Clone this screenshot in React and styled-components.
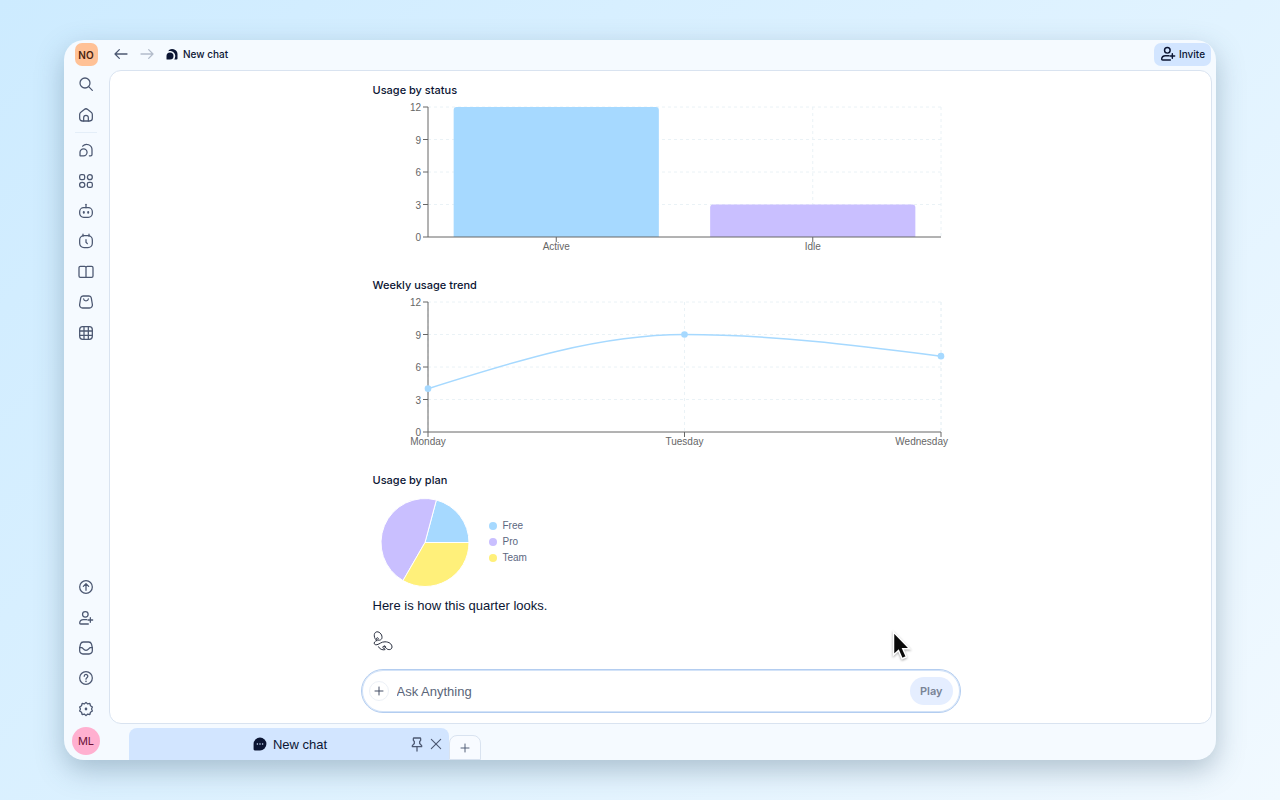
import React, { useState } from 'react'
import styled, { createGlobalStyle } from 'styled-components';

const GlobalStyle = createGlobalStyle`
    * {
        box-sizing: border-box;
    }
    body {
        margin: 0;
        font-family: Inter, "Liberation Sans", sans-serif;
        color: #0b1533;
    }
    button, input {
        font-family: inherit;
        color: inherit;
    }
`;

const textFont = '"Liberation Sans", Inter, sans-serif';

const Backdrop = styled.div`
    min-height: 100vh;
    display: flex;
    padding: 40px 64px;
    background: linear-gradient(135deg, #cdebff 0%, #e1f3ff 60%, #f1f9ff 100%);
`;

const Window = styled.div`
    flex: 1;
    min-width: 0;
    display: flex;
    background: #f5faff;
    border-radius: 20px;
    overflow: hidden;
    box-shadow: 0 10px 28px rgba(60, 90, 115, 0.34);
`;

const SideBar = styled.nav`
    flex: none;
    width: 45px;
    display: flex;
    flex-direction: column;
    align-items: center;
    justify-content: space-between;
    padding: 3px 1px 5px 0;
`;

const SideGroup = styled.div`
    display: flex;
    flex-direction: column;
    align-items: center;
`;

const IconList = styled.div`
    display: grid;
    grid-auto-rows: 1fr;
    align-items: center;
    height: ${({ $height }) => $height}px;
`;

const Workspace = styled.button`
    width: 23px;
    height: 23px;
    margin-bottom: 2px;
    padding: 0;
    border: 0;
    border-radius: 7px;
    background: #ffc196;
    color: #4a2410;
    font-size: 10px;
    font-weight: 600;
`;

const Avatar = styled.button`
    width: 28px;
    height: 28px;
    margin-top: 3px;
    padding: 0;
    border: 0;
    border-radius: 50%;
    background: #ffb0d0;
    color: #6b1237;
    font-size: 11px;
`;

const IconButton = styled.button`
    display: flex;
    align-items: center;
    justify-content: center;
    width: ${({ $width }) => $width || 30}px;
    height: ${({ $height }) => $height || 30}px;
    padding: 0;
    border: 0;
    background: none;
    color: ${({ $color }) => $color || '#4c5872'};
`;

const Divider = styled.hr`
    width: 22px;
    height: 1px;
    margin: 2px 0;
    border: 0;
    background: #e4eef8;
`;

const Main = styled.div`
    flex: 1;
    min-width: 0;
    display: flex;
    flex-direction: column;
    padding-right: 4px;
`;

const TopBar = styled.header`
    display: flex;
    align-items: center;
    justify-content: space-between;
    height: 30px;
    padding-bottom: 2px;
`;

const Crumbs = styled.div`
    display: flex;
    align-items: center;
`;

const PageTitle = styled.h1`
    display: flex;
    align-items: center;
    gap: 5px;
    margin: 0 0 0 6px;
    font-size: 10px;
    line-height: 16px;
    font-weight: 500;
`;

const Invite = styled.button`
    display: flex;
    align-items: center;
    gap: 3px;
    height: 23px;
    margin-right: 1px;
    padding: 0 6px;
    border: 0;
    border-radius: 7px;
    background: #d2e5ff;
    font-size: 10px;
    font-weight: 500;
`;

const Panel = styled.main`
    flex: 1;
    min-height: 0;
    display: flex;
    flex-direction: column;
    justify-content: space-between;
    align-items: center;
    padding: 11px 16px 10px;
    border: 1px solid #d9e3f0;
    border-radius: 12px;
    background: #fff;
`;

const Answer = styled.div`
    width: 100%;
    max-width: 600px;
    padding: 0 12px;
`;

const Section = styled.section`
    margin-bottom: ${({ $gap }) => $gap}px;
`;

const SectionTitle = styled.h2`
    margin: 0;
    font-size: 11px;
    line-height: 16px;
    font-weight: 500;
`;

const ChartSvg = styled.svg`
    display: block;
    width: 100%;
    height: auto;
    text {
        font-family: ${textFont};
        font-size: 10px;
        fill: #666;
    }
`;

const PieRow = styled.div`
    display: flex;
    align-items: center;
    gap: 12px;
`;

const Legend = styled.ul`
    margin: 0;
    padding: 0;
    list-style: none;
`;

const LegendItem = styled.li`
    display: flex;
    align-items: center;
    gap: 6px;
    color: #5c6780;
    font-family: ${textFont};
    font-size: 10px;
    line-height: 16px;
    &::before {
        content: '';
        width: 8px;
        height: 8px;
        border-radius: 50%;
        background: ${({ $color }) => $color};
    }
`;

const Reply = styled.p`
    margin: 0 0 15px;
    font-family: ${textFont};
    font-size: 13px;
    line-height: 20px;
`;

const Composer = styled.form`
    display: flex;
    align-items: center;
    width: 100%;
    max-width: 600px;
    height: 44px;
    padding: 0 7px;
    border: 1px solid #b3cdf0;
    border-radius: 22px;
    background: #fff;
    box-shadow: inset 0 0 0 1px #d3e3f8;
`;

const AddButton = styled.button`
    display: flex;
    align-items: center;
    justify-content: center;
    width: 20px;
    height: 20px;
    padding: 0;
    border: 1px solid #edf1f7;
    border-radius: 50%;
    background: #fff;
    color: #3c4760;
`;

const Ask = styled.input`
    flex: 1;
    min-width: 0;
    padding: 0 8px;
    border: 0;
    outline: 0;
    background: none;
    font-family: ${textFont};
    font-size: 13px;
    &::placeholder {
        color: #5a6579;
        opacity: 1;
    }
`;

const Play = styled.button`
    height: 28px;
    padding: 0 10px;
    border: 0;
    border-radius: 14px;
    background: #e5eeff;
    color: #798496;
    font-size: 11px;
    font-weight: 600;
`;

const TabBar = styled.div`
    display: flex;
    align-items: flex-end;
    height: 36px;
    padding-left: 20px;
`;

const Tab = styled.div`
    display: flex;
    align-items: center;
    width: 320px;
    height: 32px;
    padding: 0 4px 0 44px;
    border-radius: 8px 8px 0 0;
    background: #d2e5ff;
`;

const TabLabel = styled.button`
    flex: 1;
    display: flex;
    align-items: center;
    justify-content: center;
    gap: 6px;
    padding: 0;
    border: 0;
    background: none;
    font-family: ${textFont};
    font-size: 13px;
`;

const NewTab = styled.button`
    display: flex;
    align-items: center;
    justify-content: center;
    width: 32px;
    height: 25px;
    padding: 0;
    border: 1px solid #d9e3f0;
    border-radius: 8px 8px 0 0;
    background: #f8fbff;
    color: #4c5872;
`;

const Cursor = styled.svg`
    position: fixed;
    left: 890px;
    top: 629px;
    pointer-events: none;
    filter: drop-shadow(0 1px 1px rgba(0, 0, 0, 0.35));
`;

const icons = {
    search: <><circle cx="10.5" cy="10.5" r="7.5" /><path d="M16 16l5.5 5.5" /></>,
    home: <><path d="M2.500 11.300c0-1.400.6-2.600 1.700-3.400l5.300-4.300c1.500-1.200 3.500-1.200 5 0l5.300 4.300c1.100.8 1.700 2 1.700 3.400v5.700a4 4 0 0 1-4 4H6.500a4 4 0 0 1-4-4z" /><path d="M8.500 21v-5a3.500 3.500 0 0 1 7 0v5" /></>,
    chats: <><path d="M3 15.500a5.300 5.300 0 1 1 5.300 5.300H3.800a.8.8 0 0 1-.8-.8z" /><path d="M7 6.300a8 8 0 0 1 14 5.500v7a2 2 0 0 1-2 2h-2" /></>,
    apps: <><rect x="2.500" y="2.500" width="7.500" height="7.500" rx="2.500" /><circle cx="17.800" cy="6.300" r="3.700" /><circle cx="6.300" cy="17.800" r="3.900" /><rect x="14" y="14" width="7.500" height="7.500" rx="2.500" /></>,
    bot: <><rect x="2.500" y="7" width="19" height="14.500" rx="6" /><path d="M12 7V2" /><path d="M8.700 13.500v1M15.300 13.500v1" strokeWidth="3" /></>,
    clock: <><rect x="2.500" y="4" width="19" height="18" rx="6.500" /><path d="M7.500 1.800v3M16.500 1.800v3M12 10v3.800l2 2.200" /></>,
    book: <path d="M12 5.500a2 2 0 0 0-2-2H3.500a2 2 0 0 0-2 2v12.500a2 2 0 0 0 2 2h17a2 2 0 0 0 2-2V5.500a2 2 0 0 0-2-2H14a2 2 0 0 0-2 2V20" />,
    bag: <><path d="M7.500 3h9a3.500 3.500 0 0 1 3.400 2.900l1.600 9.500a4.500 4.500 0 0 1-4.400 5.600H6.900a4.500 4.500 0 0 1-4.400-5.600l1.600-9.500a3.500 3.500 0 0 1 3.400-2.900z" /><path d="M8.500 7.500c.4 3.600 6.600 3.600 7 0" /></>,
    grid: <><rect x="2.500" y="2.500" width="19" height="19" rx="4.500" /><path d="M9 2.500v19M15.500 2.500v19M2.500 9h19M2.500 15.500h19" /></>,
    up: <><circle cx="12" cy="12" r="9.500" /><path d="M12 17V7.500M8 11l4-4 4 4" /></>,
    invite: <><circle cx="11" cy="6.500" r="4.200" /><path d="M13 14.500H8a5.500 5.500 0 0 0-5.500 5c0 .9.600 1.500 1.500 1.500h11.500M18.500 11.500v7M15 15h7" /></>,
    inbox: <><path d="M8 3h8a4.500 4.500 0 0 1 4.200 3l1.300 5.500V16a5 5 0 0 1-5 5h-9a5 5 0 0 1-5-5v-4.500L3.800 6A4.500 4.500 0 0 1 8 3z" /><path d="M2.500 11.500h3c2 0 2.500 4 6.500 4s4.500-4 6.500-4h3" /></>,
    help: <><circle cx="12" cy="12" r="9.500" /><path d="M9.300 9.500c0-3.700 5.400-3.600 5.400-.2 0 2.200-2.700 2.200-2.700 4.400" /><path d="M12 16.900v.1" strokeWidth="2.500" /></>,
    gear: <><path d="M12 2l2.500 2.400 3.300-.7.900 3.400 2.900 1.900-1.300 3 1.300 3-2.900 1.900-.9 3.400-3.300-.7L12 22l-2.500-2.400-3.300.7-.9-3.400L2.400 15l1.300-3-1.300-3 2.900-1.900.9-3.400 3.300.7z" /><path d="M12 11.900v.2" strokeWidth="4" /></>,
    back: <path d="M21 12H3.500M9.500 5.500L3 12l6.500 6.500" />,
    forward: <path d="M3 12h17.500M14.500 5.500L21 12l-6.500 6.500" />,
    plus: <path d="M12 4v16M4 12h16" />,
    close: <path d="M4 4l16 16M20 4L4 20" />,
    pin: <><path d="M7.500 3h9a1 1 0 0 1 1 1v2.500l-1.500 1.700v3l3 3.300v1.500H5v-1.500l3-3.300v-3L6.500 6.500V4a1 1 0 0 1 1-1z" /><path d="M12 16v6.500" /></>,
};

const Icon = ({ name, size = 16, weight = 1.9 }) => (
    <svg width={size} height={size} viewBox="0 0 24 24" fill="none" stroke="currentColor"
        strokeWidth={weight} strokeLinecap="round" strokeLinejoin="round" aria-hidden="true">
        {icons[name]}
    </svg>
);

const topItems = [['search', 'Search'], ['home', 'Home']];

const navItems = [
    ['chats', 'Chats'],
    ['apps', 'Apps'],
    ['bot', 'Agents'],
    ['clock', 'Scheduled'],
    ['book', 'Library'],
    ['bag', 'Store'],
    ['grid', 'Tables'],
];

const footItems = [
    ['up', 'Upgrade'],
    ['invite', 'Invite people'],
    ['inbox', 'Inbox'],
    ['help', 'Help'],
    ['gear', 'Settings'],
];

const BLUE = '#a6d9ff';
const PURPLE = '#c9bfff';
const YELLOW = '#fff07a';

const LEFT = 55;
const RIGHT = 568;
const TOP = 9;
const BOTTOM = 139;
const ticks = [0, 3, 6, 9, 12];
const yFor = (value) => BOTTOM - (value / 12) * (BOTTOM - TOP);

const statusData = [
    { name: 'Active', value: 12, color: BLUE },
    { name: 'Idle', value: 3, color: PURPLE },
];

const weekData = [
    { name: 'Monday', value: 4 },
    { name: 'Tuesday', value: 9 },
    { name: 'Wednesday', value: 7 },
];

const planData = [
    { name: 'Free', value: 5, color: BLUE },
    { name: 'Pro', value: 11, color: PURPLE },
    { name: 'Team', value: 8, color: YELLOW },
];

// grid lines, both axes and the y labels
const Frame = ({ columns, children }) => (
    <>
        <g stroke="#eaf2f6" strokeDasharray="3 3">
            {ticks.slice(1).map((t) => <path key={t} d={`M${LEFT} ${yFor(t)}H${RIGHT}`} />)}
            {columns.map((x) => <path key={x} d={`M${x} ${TOP}V${BOTTOM}`} />)}
            <path d={`M${RIGHT} ${TOP}V${BOTTOM}`} />
        </g>
        {children}
        <g stroke="#666" fill="none">
            <path d={`M${LEFT} ${TOP}V${BOTTOM}H${RIGHT}`} />
            {ticks.map((t) => <path key={t} d={`M${LEFT - 5} ${yFor(t)}h5`} />)}
            {columns.map((x) => <path key={x} d={`M${x} ${BOTTOM}v5`} />)}
        </g>
        {ticks.map((t) => <text key={t} x={LEFT - 7} y={yFor(t) + 4} textAnchor="end">{t}</text>)}
    </>
);

const BarChart = () => {
    const band = (RIGHT - LEFT) / statusData.length;
    const centers = statusData.map((d, i) => LEFT + band * (i + 0.5));

    return (
        <ChartSvg viewBox="0 0 576 163" role="img" aria-label="Usage by status">
            <Frame columns={centers}>
                {statusData.map((d, i) => {
                    const x = centers[i] - band * 0.4;
                    const y = yFor(d.value);
                    const w = band * 0.8;
                    return (
                        <path
                            key={d.name}
                            fill={d.color}
                            d={`M${x} ${BOTTOM}V${y + 3}a3 3 0 0 1 3-3h${w - 6}a3 3 0 0 1 3 3V${BOTTOM}z`}
                        />
                    );
                })}
            </Frame>
            {statusData.map((d, i) => (
                <text key={d.name} x={centers[i]} y="152" textAnchor="middle">{d.name}</text>
            ))}
        </ChartSvg>
    );
}

const LineChart = () => {
    const step = (RIGHT - LEFT) / 2;
    const points = weekData.map((d, i) => [LEFT + step * i, yFor(d.value)]);
    const [a, b, c] = points;
    const curve = `M${a[0]} ${a[1]}`
        + `C${a[0] + step / 3} ${(a[1] + b[1]) / 2} ${b[0] - step / 3} ${b[1]} ${b[0]} ${b[1]}`
        + `C${b[0] + step / 3} ${b[1]} ${c[0] - step / 3} ${(b[1] + c[1]) / 2} ${c[0]} ${c[1]}`;

    return (
        <ChartSvg viewBox="0 0 576 163" role="img" aria-label="Weekly usage trend">
            <Frame columns={points.map((p) => p[0])} />
            <path d={curve} fill="none" stroke={BLUE} strokeWidth="1.5" />
            {points.map(([x, y]) => <circle key={x} cx={x} cy={y} r="3.3" fill={BLUE} />)}
            {weekData.map((d, i) => (
                <text
                    key={d.name}
                    x={i === 2 ? 575 : points[i][0]}
                    y="152"
                    textAnchor={i === 2 ? 'end' : 'middle'}
                >
                    {d.name}
                </text>
            ))}
        </ChartSvg>
    );
}

const PieChart = () => {
    const total = planData.reduce((sum, d) => sum + d.value, 0);
    const at = (v) => {
        const angle = (v / total) * Math.PI * 2;
        return `${52 + 44 * Math.cos(angle)} ${54.5 - 44 * Math.sin(angle)}`;
    };
    let start = 0;

    return (
        <svg width="104" height="108" viewBox="0 0 104 108" role="img" aria-label="Usage by plan">
            {planData.map((d) => {
                const from = start;
                start += d.value;
                return (
                    <path
                        key={d.name}
                        d={`M52 54.5L${at(from)}A44 44 0 0 0 ${at(start)}z`}
                        fill={d.color}
                        stroke="#fff"
                    />
                );
            })}
        </svg>
    );
}

const ChatsFilled = () => (
    <svg width="12" height="12" viewBox="0 0 24 24" fill="currentColor" aria-hidden="true">
        <path d="M1 16a7 7 0 1 1 7 7H2a1 1 0 0 1-1-1z" />
        <path d="M4 6.500A10.500 10.500 0 0 1 23 12v9a2 2 0 0 1-2 2h-4.500c1.300-1.900 2-4.400 2-7C18.500 10.500 13.500 6 8 6c-1.400 0-2.800.1-4 .5z" />
    </svg>
);

const ChatDots = () => (
    <svg width="14" height="14" viewBox="0 0 24 24" fill="#0b1533" aria-hidden="true">
        <path d="M12 1a11 11 0 1 1 0 22H3a2 2 0 0 1-2-2v-9A11 11 0 0 1 12 1z" />
        <g fill="#d2e5ff">
            <circle cx="7.500" cy="12" r="1.300" />
            <circle cx="12" cy="12" r="1.300" />
            <circle cx="16.500" cy="12" r="1.300" />
        </g>
    </svg>
);

const Knot = () => (
    <svg width="20" height="20" viewBox="0 0 20 20" fill="none" stroke="#2a3040" strokeLinecap="round" aria-hidden="true">
        <path d="M3.800 9.500C.8 8 0 1.500 3.800 .8C7 .5 9.800 4.500 8.800 7.500C8 9.800 3.500 9.800 3.500 7.600C3.500 6.200 6 6.400 5.300 8" />
        <path d="M3.800 9.500C0 10.500 .5 14.500 4 13.700C7 13 8 10.800 12 10.800C16 10.800 19 13 19 16C19 19 15 19.300 13.500 17.500C12 15.500 9.800 14.500 9.800 16.300C10 18.200 13 17.500 12.600 15.700C12 14.300 10.800 14.500 11 15.600" />
        <path d="M5.500 15.800C6.300 18 9.500 19.500 12 18.700" />
    </svg>
);

const NavButtons = ({ items, height }) => (
    <IconList $height={height}>
        {items.map(([name, label]) => (
            <IconButton key={name} type="button" aria-label={label}>
                <Icon name={name} />
            </IconButton>
        ))}
    </IconList>
);

const App = () => {

    const [question, setQuestion] = useState('');

    return (
        <>
            <GlobalStyle />
            <Backdrop>
                <Window>
                    <SideBar>
                        <SideGroup>
                            <Workspace type="button">NO</Workspace>
                            <NavButtons items={topItems} height={62} />
                            <Divider />
                            <NavButtons items={navItems} height={213} />
                        </SideGroup>
                        <SideGroup>
                            <NavButtons items={footItems} height={152} />
                            <Avatar type="button">ML</Avatar>
                        </SideGroup>
                    </SideBar>

                    <Main>
                        <TopBar>
                            <Crumbs>
                                <IconButton type="button" $width={24} $height={24} aria-label="Back">
                                    <Icon name="back" />
                                </IconButton>
                                <IconButton type="button" $width={27} $height={24} $color="#b3bccb" aria-label="Forward">
                                    <Icon name="forward" />
                                </IconButton>
                                <PageTitle><ChatsFilled />New chat</PageTitle>
                            </Crumbs>
                            <Invite type="button"><Icon name="invite" weight={2.2} />Invite</Invite>
                        </TopBar>

                        <Panel>
                            <Answer>
                                <Section $gap={16}>
                                    <SectionTitle>Usage by status</SectionTitle>
                                    <BarChart />
                                </Section>
                                <Section $gap={16}>
                                    <SectionTitle>Weekly usage trend</SectionTitle>
                                    <LineChart />
                                </Section>
                                <Section $gap={0}>
                                    <SectionTitle>Usage by plan</SectionTitle>
                                    <PieRow>
                                        <PieChart />
                                        <Legend>
                                            {planData.map((d) => (
                                                <LegendItem key={d.name} $color={d.color}>{d.name}</LegendItem>
                                            ))}
                                        </Legend>
                                    </PieRow>
                                </Section>
                                <Reply>Here is how this quarter looks.</Reply>
                                <Knot />
                            </Answer>

                            <Composer onSubmit={(e) => e.preventDefault()}>
                                <AddButton type="button" aria-label="Add">
                                    <Icon name="plus" size={12} />
                                </AddButton>
                                <Ask
                                    value={question}
                                    onChange={({ target }) => setQuestion(target.value)}
                                    placeholder="Ask Anything"
                                    aria-label="Ask Anything"
                                />
                                <Play type="submit">Play</Play>
                            </Composer>
                        </Panel>

                        <TabBar>
                            <Tab>
                                <TabLabel type="button"><ChatDots />New chat</TabLabel>
                                <IconButton type="button" $width={20} $height={24} aria-label="Pin tab">
                                    <Icon name="pin" />
                                </IconButton>
                                <IconButton type="button" $width={18} $height={24} aria-label="Close tab">
                                    <Icon name="close" size={14} />
                                </IconButton>
                            </Tab>
                            <NewTab type="button" aria-label="New tab"><Icon name="plus" size={12} /></NewTab>
                        </TabBar>
                    </Main>
                </Window>
            </Backdrop>
            <Cursor width="24" height="34" viewBox="0 0 24 34" aria-hidden="true">
                <path d="M3.500 3v23l5-4.600 3.600 8.300 4.300-1.900-3.600-8h6.900z" fill="#0a0a0a" stroke="#fff" strokeWidth="1.500" />
            </Cursor>
        </>
    );
}

export default App;
